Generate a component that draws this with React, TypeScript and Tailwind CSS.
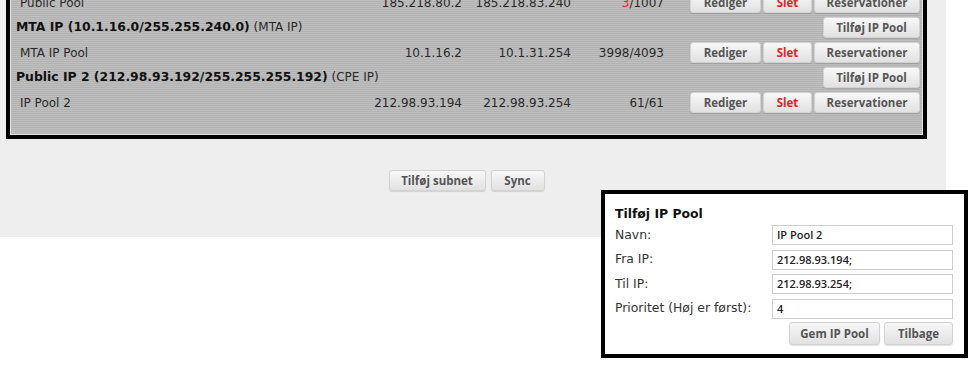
import React from "react";

const btn =
  "flex h-[21px] items-center justify-center rounded-[3px] border border-[#d2d2d2] bg-gradient-to-b from-[#f8f8f8] to-[#e1e1e1] text-[11.5px] font-bold text-[#555] shadow-[0_1px_1px_rgba(0,0,0,0.12)] [font-family:'Open_Sans',sans-serif]";

function Btn({ label, className = "", red = false }: { label: string; className?: string; red?: boolean }) {
  return <div className={`${btn} ${red ? "text-[#ec1c24]" : ""} ${className}`}>{label}</div>;
}

function PoolRow({ name, from, to, used, total }: { name: string; from: string; to: string; used: string; total: string; }) {
  return (
    <div className="flex h-[25px] items-center pl-[9px] pr-[2px]">
      <div className="flex-1">{name}</div>
      <div className="w-[120px] text-right">{from}</div>
      <div className="w-[109px] text-right">{to}</div>
      <div className="w-[93px] text-right">
        <span className={used === "3" ? "text-[#ec1c24]" : ""}>{used}</span>/{total}
      </div>
      <div className="ml-[26px] flex gap-[2px]">
        <Btn label="Rediger" className="w-[71px]" />
        <Btn label="Slet" red className="w-[49px]" />
        <Btn label="Reservationer" className="w-[106px]" />
      </div>
    </div>
  );
}

function SubnetRow({ title, kind }: { title: string; kind: string }) {
  return (
    <div className="flex h-[25px] items-center pl-[5px] pr-[2px]">
      <div className="flex-1">
        <span className="text-[12.4px] font-bold text-[#111]">{title}</span> <span>({kind})</span>
      </div>
      <Btn label="Tilføj IP Pool" className="w-[97px]" />
    </div>
  );
}

function Field({ label, value }: { label: string; value: string }) {
  return (
    <div className="flex h-[24.5px] items-center">
      <div className="flex-1 text-[12.4px]">{label}</div>
      <div className="flex h-[20px] w-[181px] items-center border border-[#cfcfcf] bg-white px-[4px] text-[11px] font-semibold text-[#222] [font-family:'Open_Sans',sans-serif]">
        {value}
      </div>
    </div>
  );
}

export default function App() {
  return (
    <div className="relative h-[365px] w-[980px] overflow-hidden bg-white text-[12px] text-[#2a2a2a] [font-family:'DejaVu_Sans',Verdana,sans-serif]">
      <div className="flow-root h-[237px] w-[946px] bg-[#eeeeee] pl-[6px]">
        <div className="-mt-[15px] w-[921px] border-4 border-black">
          <div className="border border-[#e4e4e4] bg-[repeating-linear-gradient(0deg,#b3b3b3_0px,#b3b3b3_1px,#bebebe_1px,#bebebe_2px)] pb-[19px]">
            <PoolRow name="Public Pool" from="185.218.80.2" to="185.218.83.240" used="3" total="1007" />
            <SubnetRow title="MTA IP (10.1.16.0/255.255.240.0)" kind="MTA IP" />
            <PoolRow name="MTA IP Pool" from="10.1.16.2" to="10.1.31.254" used="3998" total="4093" />
            <SubnetRow title="Public IP 2 (212.98.93.192/255.255.255.192)" kind="CPE IP" />
            <PoolRow name="IP Pool 2" from="212.98.93.194" to="212.98.93.254" used="61" total="61" />
          </div>
        </div>
        <div className="mt-[31px] flex w-[921px] justify-center gap-[5px]">
          <Btn label="Tilføj subnet" className="w-[97px]" />
          <Btn label="Sync" className="w-[54px]" />
        </div>
      </div>

      <div className="absolute left-[601px] top-[190px] h-[168px] w-[367px] border-4 border-black bg-white pl-[10px] pr-[11px] pt-[11px] text-[#333]">
        <div className="mb-[1px] h-[17px] text-[12.4px] font-bold text-[#111]">Tilføj IP Pool</div>
        <Field label="Navn:" value="IP Pool 2" />
        <Field label="Fra IP:" value="212.98.93.194;" />
        <Field label="Til IP:" value="212.98.93.254;" />
        <Field label="Prioritet (Høj er først):" value="4" />
        <div className="mt-[1px] flex justify-end gap-[4px]">
          <Btn label="Gem IP Pool" className="h-[23px] w-[91px]" />
          <Btn label="Tilbage" className="h-[23px] w-[69px]" />
        </div>
      </div>
    </div>
  );
}
